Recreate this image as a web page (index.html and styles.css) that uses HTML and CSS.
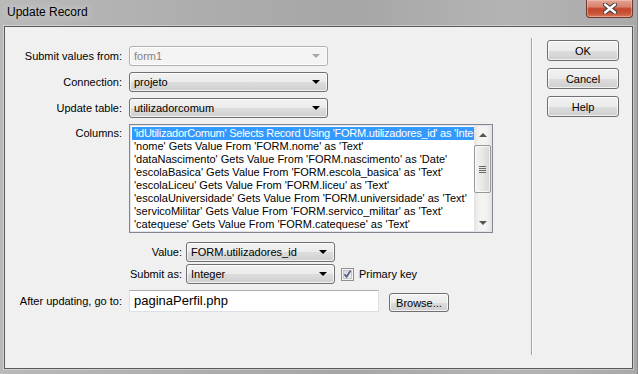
FILE: index.html
```html
<!DOCTYPE html>
<html lang="en">
<head>
    <meta charset="UTF-8">
    <title>Update Record</title>
    <link rel="stylesheet" href="styles.css">
</head>
<body>
    <div class="window">
        <!-- Title bar -->
        <div class="titlebar">
            <span class="title">Update Record</span>
            <div class="close-btn">
                <svg width="14" height="11" viewBox="0 0 14 11">
                    <path d="M2 1.5 L12 9.5 M12 1.5 L2 9.5" stroke="#3a3a3a" stroke-width="4.4" stroke-linecap="round"/>
                    <path d="M2 1.5 L12 9.5 M12 1.5 L2 9.5" stroke="#ffffff" stroke-width="2.4" stroke-linecap="round"/>
                </svg>
            </div>
        </div>

        <div class="client">
            <div class="form-area">
                <div class="row">
                    <span class="label">Submit values from:</span>
                    <div class="combo disabled"><span class="combo-text">form1</span><span class="arrow"></span></div>
                </div>
                <div class="row">
                    <span class="label">Connection:</span>
                    <div class="combo"><span class="combo-text">projeto</span><span class="arrow"></span></div>
                </div>
                <div class="row">
                    <span class="label">Update table:</span>
                    <div class="combo"><span class="combo-text">utilizadorcomum</span><span class="arrow"></span></div>
                </div>
                <div class="row row-top">
                    <span class="label label-top">Columns:</span>
                    <div class="listbox">
                        <ul class="list-items">
                            <li class="selected">'idUtilizadorComum' Selects Record Using 'FORM.utilizadores_id' as 'Inte</li>
                            <li>'nome' Gets Value From 'FORM.nome' as 'Text'</li>
                            <li>'dataNascimento' Gets Value From 'FORM.nascimento' as 'Date'</li>
                            <li>'escolaBasica' Gets Value From 'FORM.escola_basica' as 'Text'</li>
                            <li>'escolaLiceu' Gets Value From 'FORM.liceu' as 'Text'</li>
                            <li>'escolaUniversidade' Gets Value From 'FORM.universidade' as 'Text'</li>
                            <li>'servicoMilitar' Gets Value From 'FORM.servico_militar' as 'Text'</li>
                            <li>'catequese' Gets Value From 'FORM.catequese' as 'Text'</li>
                        </ul>
                        <div class="scrollbar">
                            <span class="sb-btn"><span class="tri-up"></span></span>
                            <div class="sb-track">
                                <div class="sb-thumb"><span class="grip"></span></div>
                            </div>
                            <span class="sb-btn"><span class="tri-down"></span></span>
                        </div>
                    </div>
                </div>

                <div class="sub-rows">
                    <div class="row">
                        <span class="label label-wide">Value:</span>
                        <div class="combo combo-small"><span class="combo-text">FORM.utilizadores_id</span><span class="arrow"></span></div>
                    </div>
                    <div class="row">
                        <span class="label label-wide">Submit as:</span>
                        <div class="combo combo-small"><span class="combo-text">Integer</span><span class="arrow"></span></div>
                        <span class="checkbox">
                            <svg width="13" height="13" viewBox="0 0 13 13">
                                <defs>
                                    <linearGradient id="cbg" x1="0" y1="0" x2="1" y2="1">
                                        <stop offset="0" stop-color="#d4d4d4"/>
                                        <stop offset="1" stop-color="#f4f4f4"/>
                                    </linearGradient>
                                </defs>
                                <rect x="0.5" y="0.5" width="12" height="12" fill="#f4f4f4" stroke="#8e8f8f"/>
                                <rect x="2.5" y="2.5" width="8" height="8" fill="url(#cbg)" stroke="#c6c6c6"/>
                                <path d="M3.5 6.3 L5.6 8.8 L9.6 2.6" fill="none" stroke="#4c5d88" stroke-width="1.7"/>
                            </svg>
                        </span>
                        <span class="check-label">Primary key</span>
                    </div>
                </div>

                <div class="row row-after">
                    <span class="label">After updating, go to:</span>
                    <div class="textbox">paginaPerfil.php</div>
                    <div class="btn btn-browse">Browse...</div>
                </div>
            </div>

            <div class="divider"></div>

            <div class="button-col">
                <div class="btn btn-side">OK</div>
                <div class="btn btn-side">Cancel</div>
                <div class="btn btn-side">Help</div>
            </div>
        </div>
    </div>
</body>
</html>
```

FILE: styles.css
```css
* {
    margin: 0;
    padding: 0;
    box-sizing: border-box;
}

body {
    width: 638px;
    height: 374px;
    overflow: hidden;
    font-family: 'Liberation Sans', Arial, sans-serif;
    font-size: 11px;
    color: #000;
    background: linear-gradient(90deg, #b9b9b9 0%, #acacac 35%, #a6a6a6 55%, #b4b4b4 80%, #a9a9a9 100%);
}

.window {
    display: flex;
    flex-direction: column;
    height: 374px;
    border-right: 1px solid #8a8a8a;
}

/* Title bar */
.titlebar {
    height: 26px;
    display: flex;
    align-items: flex-start;
    justify-content: space-between;
}

.title {
    font-size: 12px;
    padding: 5px 0 0 7px;
    color: #000;
    text-shadow: 0 0 8px rgba(255, 255, 255, 0.8);
}

.close-btn {
    width: 47px;
    height: 18px;
    margin-right: 4px;
    border: 1px solid #6f3a30;
    border-top: none;
    border-radius: 0 0 4px 4px;
    background: linear-gradient(#e3a495 0%, #d7826c 40%, #c4442b 52%, #c9563a 80%, #d9785a 100%);
    box-shadow: inset 0 0 0 1px rgba(255, 210, 200, 0.45);
    display: flex;
    align-items: center;
    justify-content: center;
}

/* Client area */
.client {
    height: 343px;
    margin: 0 4px 0 4px;
    border: 1px solid #5a5a5a;
    background: #f0f0f0;
    display: flex;
    box-shadow: 0 0 0 1px rgba(255, 255, 255, 0.35);
}

.form-area {
    width: 526px;
    padding-top: 19px;
    display: flex;
    flex-direction: column;
}

.row {
    display: flex;
    align-items: center;
    margin-bottom: 6px;
}

.row-top {
    align-items: flex-start;
    margin-bottom: 9px;
}

.label {
    width: 117px;
    margin-right: 7px;
    text-align: right;
    white-space: nowrap;
}

.label-top {
    padding-top: 3px;
}

.label-wide {
    width: 177px;
    margin-right: 4px;
}

/* Combo boxes */
.combo {
    width: 199px;
    height: 20px;
    border: 1px solid #707070;
    border-radius: 3px;
    background: linear-gradient(#f2f2f2 0%, #ebebeb 50%, #dddddd 51%, #cfcfcf 100%);
    box-shadow: inset 0 0 0 1px rgba(255, 255, 255, 0.7);
    display: flex;
    align-items: center;
    justify-content: space-between;
    padding: 0 7px 0 4px;
}

.combo.disabled {
    border-color: #adb2b5;
    background: #f4f4f4;
    color: #838383;
}

.combo-small {
    width: 149px;
}

.arrow {
    width: 0;
    height: 0;
    border-left: 4px solid transparent;
    border-right: 4px solid transparent;
    border-top: 4px solid #000;
}

.combo.disabled .arrow {
    border-top-color: #a6a6a6;
}

/* List box */
.listbox {
    width: 364px;
    height: 109px;
    border: 1px solid #828790;
    box-shadow: inset 0 0 0 1px #e2e3ea;
    background: #fff;
    display: flex;
    padding: 1px;
}

.list-items {
    list-style: none;
    flex: 1;
    overflow: hidden;
    padding: 1px 0 0 1px;
}

.list-items li {
    height: 13px;
    line-height: 13px;
    white-space: nowrap;
    overflow: hidden;
    padding-left: 2px;
}

.list-items li.selected {
    background: #3399ff;
    color: #fff;
    letter-spacing: -0.25px;
}

.scrollbar {
    width: 17px;
    display: flex;
    flex-direction: column;
    background: linear-gradient(90deg, #e3e3e3, #f3f3f3 30%, #f3f3f3 70%, #e6e6e6);
}

.sb-btn {
    height: 17px;
    display: flex;
    align-items: center;
    justify-content: center;
}

.tri-up {
    border-left: 4px solid transparent;
    border-right: 4px solid transparent;
    border-bottom: 4px solid #555;
}

.tri-down {
    border-left: 4px solid transparent;
    border-right: 4px solid transparent;
    border-top: 4px solid #555;
}

.sb-track {
    flex: 1;
    padding-top: 2px;
}

.sb-thumb {
    height: 48px;
    border: 1px solid #979797;
    border-radius: 2px;
    background: linear-gradient(90deg, #f3f3f3, #e8e8e8 50%, #d6d6d6);
    box-shadow: inset 0 0 0 1px rgba(255, 255, 255, 0.7);
    display: flex;
    align-items: center;
    justify-content: center;
}

.grip {
    width: 7px;
    height: 7px;
    background: repeating-linear-gradient(#6a6a6a 0, #6a6a6a 1px, transparent 1px, transparent 2px);
}

/* Value / submit as rows */
.sub-rows .row {
    margin-bottom: 2px;
}

.sub-rows .row:last-child {
    margin-bottom: 6px;
}

.checkbox {
    display: flex;
    margin-left: 6px;
}

.check-label {
    margin-left: 5px;
}

/* After updating */
.textbox {
    width: 250px;
    height: 22px;
    border: 1px solid #dcdfe3;
    border-top-color: #abadb3;
    background: #fff;
    font-size: 13px;
    line-height: 20px;
    padding-left: 4px;
}

.btn {
    border: 1px solid #707070;
    border-radius: 3px;
    background: linear-gradient(#f2f2f2 0%, #ebebeb 50%, #dddddd 51%, #cfcfcf 100%);
    box-shadow: inset 0 0 0 1px rgba(255, 255, 255, 0.7);
    display: flex;
    align-items: center;
    justify-content: center;
}

.btn-browse {
    width: 60px;
    height: 19px;
    margin-left: 10px;
    margin-top: 3px;
}

/* Right column */
.divider {
    width: 1px;
    margin: 11px 0 13px 0;
    background: #a0a0a0;
    border-right: 1px solid #fff;
    box-sizing: content-box;
}

.button-col {
    padding: 13px 0 0 14px;
    display: flex;
    flex-direction: column;
    gap: 7px;
}

.btn-side {
    width: 72px;
    height: 21px;
}
```
